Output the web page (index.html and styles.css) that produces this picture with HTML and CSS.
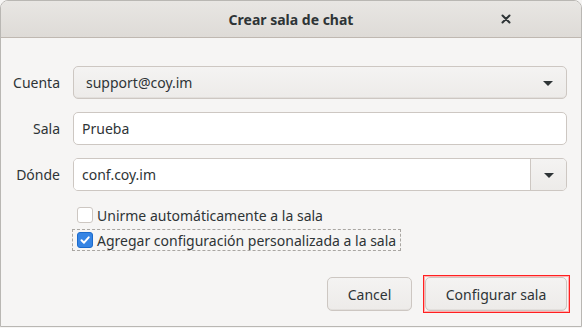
FILE: index.html
```html
<!DOCTYPE html>
<html>
<head>
  <title>Crear sala de chat</title>
  <link rel="stylesheet" href="styles.css">
</head>
<body>
  <div class="window">
    <div class="titlebar">
      <span class="title">Crear sala de chat</span>
      <span class="close">
        <svg width="10" height="10" viewBox="0 0 10 10"><path d="M1.5 1.5 L8.5 8.5 M8.5 1.5 L1.5 8.5" stroke="#2e3436" stroke-width="2" stroke-linecap="round"/></svg>
      </span>
    </div>
    <div class="content">
      <div class="form">
        <label class="label">Cuenta</label>
        <div class="combo">
          <span>support@coy.im</span>
          <span class="arrow"></span>
        </div>

        <label class="label">Sala</label>
        <div class="entry">Prueba</div>

        <label class="label">Dónde</label>
        <div class="entry-combo">
          <div class="entry-part">conf.coy.im</div>
          <div class="drop-btn"><span class="arrow"></span></div>
        </div>

        <span></span>
        <div class="checks">
          <div class="check-row">
            <span class="box"></span>
            <span>Unirme automáticamente a la sala</span>
          </div>
          <div class="check-row focused">
            <span class="box checked">
              <svg width="12" height="12" viewBox="0 0 12 12"><path d="M2.5 6.2 L5 8.7 L9.7 3.3" fill="none" stroke="#fff" stroke-width="2" stroke-linecap="round" stroke-linejoin="round"/></svg>
            </span>
            <span>Agregar configuración personalizada a la sala</span>
          </div>
        </div>
      </div>

      <div class="actions">
        <button class="btn cancel">Cancel</button>
        <span class="highlight">
          <button class="btn primary">Configurar sala</button>
        </span>
      </div>
    </div>
  </div>
</body>
</html>
```

FILE: styles.css
```css
html, body {
  margin: 0;
  padding: 0;
}

body {
  font-family: "Noto Sans", "DejaVu Sans", sans-serif;
  font-size: 14px;
  color: #2e3436;
  background: #f6f5f4;
}

.window {
  height: 327px;
  box-sizing: border-box;
  border: 1px solid #b9b7b3;
  border-radius: 8px 8px 0 0;
  background: #f6f5f4;
  overflow: hidden;
  display: flex;
  flex-direction: column;
}

.titlebar {
  height: 36px;
  flex-shrink: 0;
  border-bottom: 1px solid #bfb8b1;
  background: linear-gradient(#e8e6e3, #dedbd7);
  display: flex;
  align-items: center;
  justify-content: center;
  position: relative;
}

.title {
  font-weight: bold;
  font-size: 14px;
}

.close {
  position: absolute;
  right: 70px;
  top: 13px;
  display: flex;
}

.content {
  padding: 28px 14px 0 14px;
  display: flex;
  flex-direction: column;
}

.form {
  display: grid;
  grid-template-columns: 45px 1fr;
  column-gap: 13px;
  row-gap: 13px;
  align-items: center;
}

.label {
  text-align: right;
  white-space: nowrap;
  direction: rtl;
}

.combo,
.entry,
.entry-combo {
  height: 33px;
  box-sizing: border-box;
  border: 1px solid #cdc7c2;
  border-radius: 5px;
}

.combo {
  background: linear-gradient(#f4f3f2, #edebe9);
  display: flex;
  align-items: center;
  justify-content: space-between;
  padding: 0 13px 0 12px;
  box-shadow: inset 0 -1px 0 #e2dfdc;
}

.entry {
  background: #ffffff;
  display: flex;
  align-items: center;
  padding: 0 8px;
}

.entry-combo {
  display: flex;
  overflow: hidden;
}

.entry-part {
  flex: 1;
  background: #ffffff;
  display: flex;
  align-items: center;
  padding: 0 8px;
}

.drop-btn {
  width: 35px;
  border-left: 1px solid #cdc7c2;
  background: linear-gradient(#f4f3f2, #edebe9);
  display: flex;
  align-items: center;
  justify-content: center;
}

.arrow {
  width: 0;
  height: 0;
  border-left: 5.5px solid transparent;
  border-right: 5.5px solid transparent;
  border-top: 5.5px solid #2e3436;
  margin-top: 1px;
}

.checks {
  display: flex;
  flex-direction: column;
  gap: 3px;
  margin-left: -1px;
}

.check-row {
  display: flex;
  align-items: center;
  gap: 4px;
  height: 20px;
  padding: 0 4px;
  border: 1px dashed transparent;
  align-self: flex-start;
}

.check-row.focused {
  border-color: #a9a6a2;
}

.box {
  width: 14px;
  height: 14px;
  border: 1px solid #cdc7c2;
  border-radius: 3px;
  background: #ffffff;
  display: flex;
  align-items: center;
  justify-content: center;
}

.box.checked {
  background: #3584e4;
  border-color: #1b6acb;
}

.actions {
  display: flex;
  justify-content: flex-end;
  align-items: center;
  gap: 11px;
  margin-top: 24px;
  margin-right: -3px;
}

.btn {
  height: 34px;
  box-sizing: border-box;
  font-family: "Noto Sans", "DejaVu Sans", sans-serif;
  font-size: 14px;
  color: #2e3436;
  border: 1px solid #cdc7c2;
  border-radius: 5px;
  background: linear-gradient(#f4f3f2, #edebe9);
  box-shadow: inset 0 -1px 0 #e2dfdc;
  padding: 0 16px;
}

.cancel {
  width: 85px;
}

.highlight {
  display: flex;
  padding: 1px 2px 1px 1px;
  border: 1px solid #ff2020;
  box-shadow: inset 0 0 0 1px #ffb0b0;
}

.primary {
  width: 142px;
}
```
